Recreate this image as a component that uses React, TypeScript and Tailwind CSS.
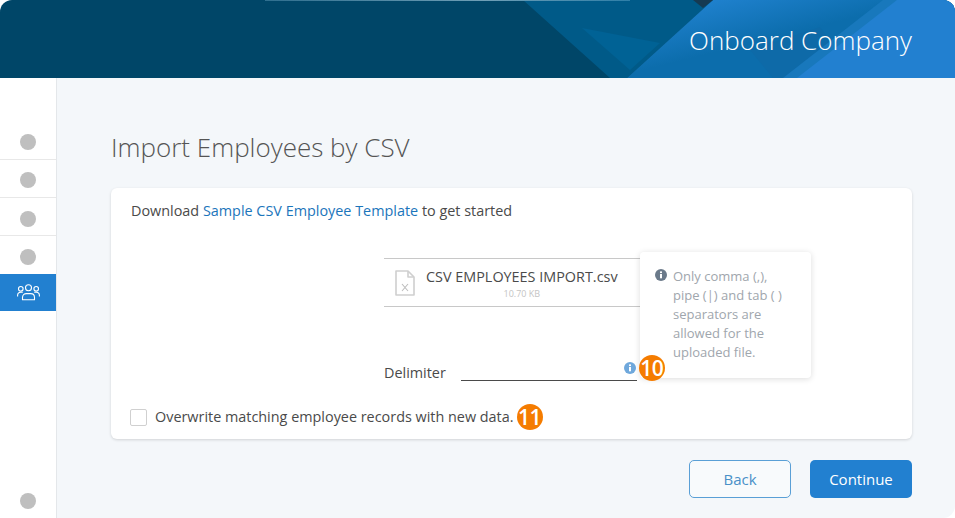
import React from "react";

function TeamIcon() {
  return (
    <svg width="23" height="17" viewBox="0 0 23 17" fill="none" stroke="white" strokeWidth="1.1">
      <circle cx="11.500" cy="3.800" r="3" />
      <circle cx="3.800" cy="4.800" r="2.300" />
      <circle cx="19.200" cy="4.800" r="2.300" />
      <path d="M5.500 15.800v-2.300c0-2.400 1.800-3.900 3.800-3.900h4.400c2 0 3.800 1.500 3.800 3.900v2.300z" strokeLinejoin="round" />
      <path d="M.6 12.500v-1c0-2 1.400-3.200 3.200-3.200h2" />
      <path d="M22.400 12.500v-1c0-2-1.400-3.200-3.200-3.200h-2" />
    </svg>
  );
}

function FileIcon() {
  return (
    <svg width="20" height="26" viewBox="0 0 20 26" fill="none" stroke="#cfcfcf" strokeWidth="1.600">
      <path d="M1 1h12l6 6v18H1z" strokeLinejoin="round" />
      <path d="M13 1v6h6" strokeLinejoin="round" />
      <path d="M7 14l6 7M13 14l-6 7" stroke="#bdbdbd" strokeWidth="1.100" />
    </svg>
  );
}

function InfoDot({ color }: { color: string }) {
  return (
    <svg width="12" height="12" viewBox="0 0 12 12">
      <circle cx="6" cy="6" r="6" fill={color} />
      <rect x="5" y="5" width="2" height="4.300" fill="white" />
      <rect x="5" y="2.400" width="2" height="1.700" fill="white" />
    </svg>
  );
}

function Badge({ n }: { n: number }) {
  return (
    <span className="relative z-10 flex h-[26px] w-[26px] shrink-0 items-center justify-center rounded-full bg-[#f57c00] text-[21px] font-semibold leading-none tracking-[-0.5px] text-white">
      {n}
    </span>
  );
}

function SideDot({ className }: { className: string }) {
  return (
    <div className={`flex h-[38px] items-center justify-center ${className}`}>
      <span className="h-4 w-4 rounded-full bg-[#bfbfbf]" />
    </div>
  );
}

export default function App() {
  return (
    <div className="flex h-[518px] w-[955px] flex-col overflow-hidden bg-white font-['Open_Sans',sans-serif] text-[#4a4a4a]">
      <header className="relative flex h-[78px] shrink-0 items-center justify-end overflow-hidden rounded-t-[12px] bg-[#004668] pt-[2px] pr-[43px]">
        <svg className="absolute inset-0" width="955" height="78" viewBox="0 0 955 78">
          <defs>
            <linearGradient id="topline" x1="0" x2="1" y1="0" y2="0">
              <stop offset="0" stopColor="#2f6f8f" />
              <stop offset="0.6" stopColor="#6f9fb6" />
              <stop offset="1" stopColor="#2f7fa8" />
            </linearGradient>
            <linearGradient id="blueband" gradientUnits="userSpaceOnUse" x1="720" y1="0" x2="732" y2="48">
              <stop offset="0" stopColor="#1e80cc" />
              <stop offset="1" stopColor="#0c6dac" />
            </linearGradient>
          </defs>
          <polygon points="523,0 713,0 627,78 610,78" fill="#005a88" />
          <polygon points="582,28 660,43 630,70" fill="#006295" />
          <polygon points="713,0 955,0 955,78 627,78" fill="url(#blueband)" />
          <polygon points="820,27 857,78 773,78 750,50" fill="#0e6aa8" />
          <polygon points="883,0 955,0 955,78 783,78" fill="#1878bc" />
          <polygon points="897,0 955,0 955,78 797,78" fill="#2280d0" />
          <polygon points="693,0 713,0 703,8" fill="#163a52" />
          <rect x="265" y="0" width="365" height="1" fill="url(#topline)" />
        </svg>
        <h1 className="relative text-[26px] font-light leading-[36px] text-white">Onboard Company</h1>
      </header>

      <div className="flex min-h-0 flex-1">
        <aside className="flex w-[57px] shrink-0 flex-col border-r border-[#e4e7ea] pt-[44px]">
          <SideDot className="border-b border-[#e8e8e8] pt-[2px]" />
          <SideDot className="border-b border-[#e8e8e8] pt-[2px]" />
          <SideDot className="border-b border-[#e8e8e8] pt-[4px]" />
          <SideDot className="pt-[4px]" />
          <div className="flex h-[37px] items-center justify-center bg-[#2280d0]">
            <TeamIcon />
          </div>
          <div className="mt-auto flex h-[25px] justify-center">
            <span className="h-4 w-4 rounded-full bg-[#bfbfbf]" />
          </div>
        </aside>

        <main className="flex min-w-0 flex-1 flex-col rounded-br-[12px] bg-[#f4f7fa] pl-[54px] pr-[43px]">
          <h2 className="mt-[49px] text-[26px] font-light leading-[40px] text-[#555]">Import Employees by CSV</h2>

          <section className="relative mt-[21px] h-[251px] rounded-[6px] bg-white px-[20px] pt-[13px] shadow-[0_1px_3px_rgba(0,0,0,0.15)]">
            <p className="text-[14.4px] leading-[20px]">
              Download <span className="text-[#1b75bb]">Sample CSV Employee Template</span> to get started
            </p>

            <div className="ml-[253px] mt-[37px] flex h-[49px] w-[256px] items-start gap-[11px] border-y border-[#c8c8c8] pl-[11px] pt-[8px]">
              <div className="pt-[3px]">
                <FileIcon />
              </div>
              <div className="flex flex-col items-center">
                <span className="text-[14.4px] leading-[20px]">CSV EMPLOYEES IMPORT.csv</span>
                <span className="mt-[1px] text-[9px] leading-[12px] text-[#c4c4c4]">10.70 KB</span>
              </div>
            </div>

            <div className="ml-[253px] mt-[46px] flex h-[28px] items-end">
              <span className="text-[14.4px] leading-[16px]">Delimiter</span>
              <div className="ml-[15px] flex h-[26px] w-[176px] items-center justify-end border-b border-[#4a4a4a] pr-[1px]">
                <InfoDot color="#6fa8dc" />
              </div>
              <div className="ml-[2px]">
                <Badge n={10} />
              </div>
            </div>

            <label className="-ml-px mt-[23px] flex items-center">
              <span className="h-[17px] w-[17px] rounded-[2px] border border-[#d0d0d0] bg-white" />
              <span className="ml-[8px] text-[14.4px] leading-[20px]">Overwrite matching employee records with new data.</span>
              <span className="ml-[3px]">
                <Badge n={11} />
              </span>
            </label>

            <div className="absolute left-[529px] top-[64px] flex h-[126px] w-[171px] gap-[6px] rounded-[4px] bg-white pl-[15px] pt-[15px] shadow-[0_1px_6px_rgba(0,0,0,0.14)]">
              <div className="pt-[2px]">
                <InfoDot color="#6b7a8a" />
              </div>
              <p className="w-[112px] text-[13px] leading-[19px] text-[#a0a6ad]">
                Only comma (,), pipe (|) and tab ( ) separators are allowed for the uploaded file.
              </p>
            </div>
          </section>

          <div className="mt-[21px] flex justify-end gap-[19px]">
            <button className="h-[38px] w-[102px] rounded-[5px] border border-[#5a9fd6] bg-[#f8fafc] text-[15px] text-[#4a90c8]">Back</button>
            <button className="h-[38px] w-[102px] rounded-[5px] bg-[#2280d0] text-[15px] text-white">Continue</button>
          </div>
        </main>
      </div>
    </div>
  );
}
